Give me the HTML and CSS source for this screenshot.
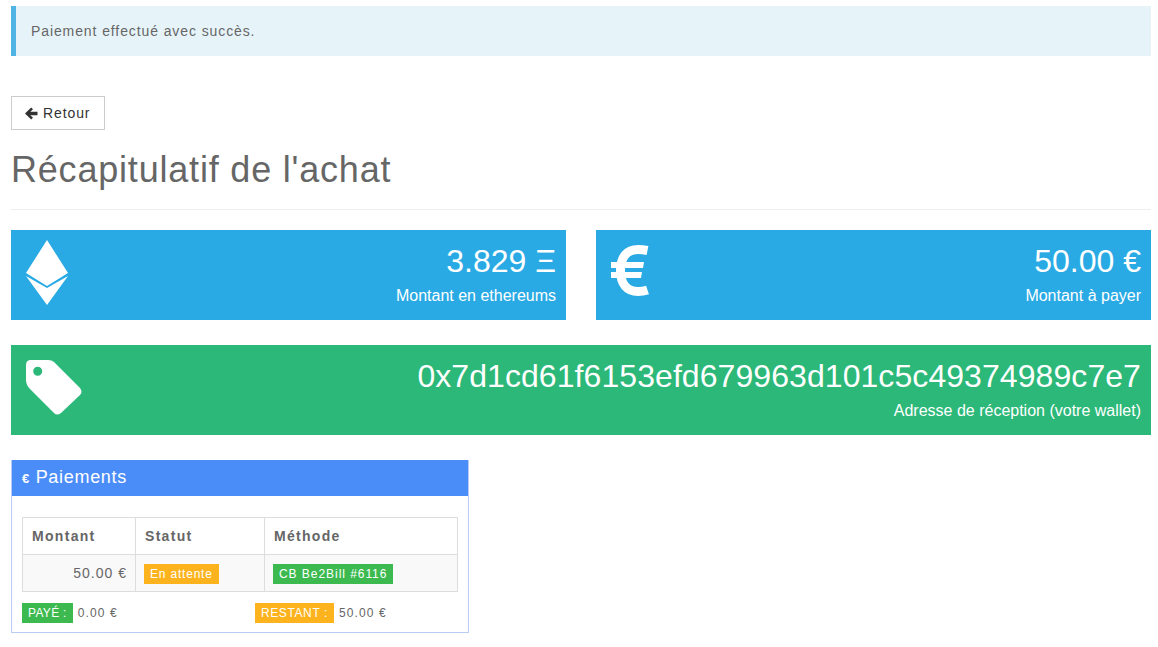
FILE: index.html
```html
<!DOCTYPE html>
<html lang="fr">
<head>
<meta charset="utf-8">
<title>Récapitulatif de l'achat</title>
<link rel="stylesheet" href="styles.css">
</head>
<body>
<div class="alert">Paiement effectué avec succès.</div>
<a class="btn" href="#">
  <svg class="btn-icon" width="13" height="13" viewBox="0 0 13 13"><path d="M0 6.500 6.200.5 8 2.300 5.300 4.700H12.500V8.300H5.300L8 10.700 6.200 12.500z"/></svg>
  Retour
</a>
<h1 class="title">Récapitulatif de l'achat</h1>
<hr class="rule">
<div class="cards">
  <div class="card card-blue">
    <svg class="icon-eth" width="42" height="65" viewBox="0 0 42 65"><path d="M21 0 42 33 21 46 0 33z"/><path d="M0 36 21 48 42 36 21 65z"/></svg>
    <div class="card-text">
      <div class="card-value">3.829 Ξ</div>
      <div class="card-label">Montant en ethereums</div>
    </div>
  </div>
  <div class="card card-blue">
    <svg class="icon-eur" width="38" height="52" viewBox="0 0 38 52"><path class="eur-arc" d="M36.500 5.500C33 4.800 30 4.500 27 4.500 16 4.500 9.500 12 9.500 25.500S16 46.500 27 46.500C30 46.500 33.500 46 36.500 45"/><path d="M0 17H33L32 23H0zM0 27H31L30 33H0z"/></svg>
    <div class="card-text">
      <div class="card-value">50.00 €</div>
      <div class="card-label">Montant à payer</div>
    </div>
  </div>
  <div class="card card-green card-wide">
    <svg class="icon-tag" width="56" height="56" viewBox="0 0 56 56"><path fill-rule="evenodd" d="M5 0H22Q26 0 28 2L54 28Q57 32 54 35L35 53Q31 56 28 53L4 29Q0 25 0 20V5Q0 0 5 0ZM11.700 6.800A4.500 4.500 0 1 0 11.700 15.800 4.500 4.500 0 1 0 11.700 6.800Z"/></svg>
    <div class="card-text">
      <div class="card-value card-address">0x7d1cd61f6153efd679963d101c5c49374989c7e7</div>
      <div class="card-label">Adresse de réception (votre wallet)</div>
    </div>
  </div>
</div>
<section class="panel">
  <h2 class="panel-head"><span class="panel-euro">€</span> Paiements</h2>
  <div class="panel-body">
    <table class="pay-table">
      <thead>
        <tr><th class="col-a">Montant</th><th class="col-b">Statut</th><th>Méthode</th></tr>
      </thead>
      <tbody>
        <tr>
          <td class="amount">50.00 €</td>
          <td class="badge-cell"><span class="badge badge-orange">En attente</span></td>
          <td class="badge-cell"><span class="badge badge-green">CB Be2Bill #6116</span></td>
        </tr>
      </tbody>
    </table>
    <div class="totals">
      <div class="total"><span class="badge badge-green">PAYÉ :</span><span class="total-val">0.00 €</span></div>
      <div class="total"><span class="badge badge-orange">RESTANT :</span><span class="total-val">50.00 €</span></div>
    </div>
  </div>
</section>
</body>
</html>
```

FILE: styles.css
```css
* { box-sizing: border-box; }
html, body { margin: 0; }
body {
  padding: 6px 7px 14px 11px;
  font-family: "Liberation Sans", Arial, sans-serif;
  font-size: 14px;
  line-height: 20px;
  letter-spacing: 0.9px;
  color: #666;
  background: #fff;
}
.alert {
  height: 50px;
  padding: 15px;
  background: #e6f4fa;
  border-left: 5px solid #4fb3e3;
  margin-bottom: 40px;
}
.btn {
  display: inline-flex;
  align-items: center;
  gap: 5px;
  height: 34px;
  padding: 0 14px 0 13px;
  border: 1px solid #ccc;
  color: #333;
  text-decoration: none;
  vertical-align: top;
}
.btn-icon { fill: #333; flex: none; }
.title {
  margin: 20px 0 0;
  font-size: 36px;
  font-weight: 400;
  line-height: 40px;
  letter-spacing: 0.8px;
}
.rule {
  margin: 19px 0 20px;
  border: 0;
  border-top: 1px solid #eee;
}
.cards {
  display: grid;
  grid-template-columns: 555px 555px;
  column-gap: 30px;
  row-gap: 25px;
  letter-spacing: 0;
}
.card {
  display: flex;
  justify-content: space-between;
  height: 90px;
  color: #fff;
}
.card-wide { grid-column: 1 / -1; }
.card-blue { background: #29aae4; }
.card-green { background: #2bb878; }
.card svg { flex: none; fill: #fff; }
.card .eur-arc { fill: none; stroke: #fff; stroke-width: 9; }
.icon-eth { margin: 10px 0 0 15px; }
.icon-eur { margin: 15px 0 0 15px; }
.icon-tag { margin: 15px 0 0 15px; }
.card-text {
  padding: 11px 10px 0 0;
  text-align: right;
}
.card-value {
  font-size: 32px;
  line-height: 40px;
  letter-spacing: 0;
}
.card-address { letter-spacing: 0.07px; }
.card-label {
  margin-top: 5px;
  font-size: 16px;
  line-height: 20px;
}
.panel {
  width: 458px;
  margin-top: 25px;
  border: 1px solid #b9cdf3;
  border-top: 0;
}
.panel-head {
  margin: 0;
  height: 36px;
  padding: 0 10px;
  background: #4b8df8;
  color: #fff;
  font-size: 18px;
  font-weight: 400;
  line-height: 34px;
  letter-spacing: 0.7px;
}
.panel-euro { font-size: 13px; font-weight: 700; }
.panel-body { padding: 21px 10px 9px 10px; }
.pay-table {
  width: 100%;
  border-collapse: collapse;
  font-size: 14px;
}
.pay-table th,
.pay-table td {
  border: 1px solid #ddd;
  padding: 8px;
  height: 37px;
  text-align: left;
  line-height: 20px;
}
.pay-table th { font-weight: 700; letter-spacing: 1.3px; padding-left: 9px; }
.pay-table tbody tr { background: #f9f9f9; }
.col-a { width: 113px; }
.col-b { width: 129px; }
.pay-table .amount { text-align: right; letter-spacing: 1px; }
.pay-table .badge-cell { padding-top: 9px; padding-bottom: 7px; }
.badge {
  display: inline-block;
  height: 20px;
  padding: 0 6px;
  color: #fff;
  font-size: 12px;
  line-height: 20px;
  vertical-align: top;
}
.badge-orange { background: #fdb31e; letter-spacing: 0.8px; }
.badge-green { background: #3cba50; letter-spacing: 0.95px; }
.totals {
  display: grid;
  grid-template-columns: 233px 1fr;
  margin-top: 11px;
}
.total { display: flex; gap: 5px; font-size: 12px; }
.total .badge-green { letter-spacing: 0.3px; }
.total .badge-orange { letter-spacing: 0.6px; }
.total-val { letter-spacing: 1.1px; }
```
